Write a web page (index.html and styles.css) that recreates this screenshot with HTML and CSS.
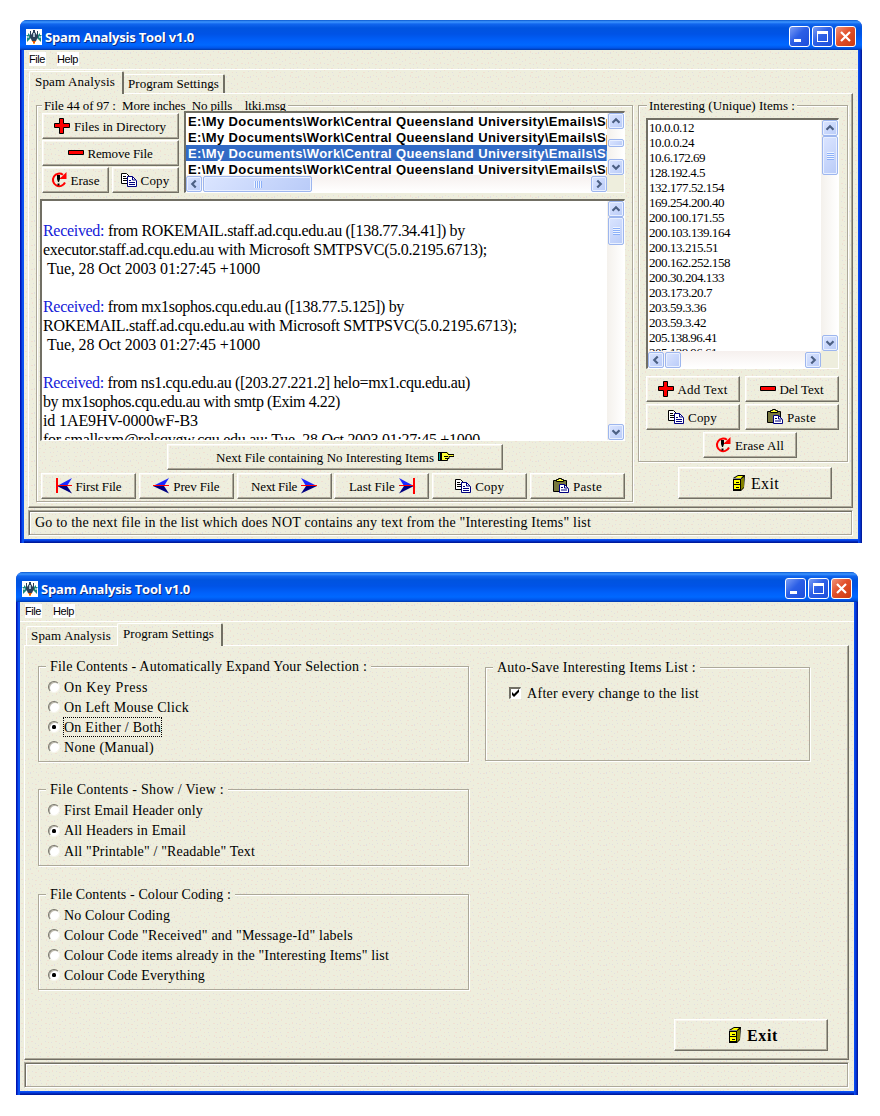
FILE: index.html
```html
<!DOCTYPE html>
<html lang="en">
<head>
<meta charset="utf-8">
<title>Spam Analysis Tool v1.0</title>
<link rel="stylesheet" href="styles.css">
</head>
<body>
<svg class="defs" width="0" height="0">
  <defs>
    <symbol id="ship" viewBox="0 0 16 16"><path fill="#fff" d="M0 0h16v16H0z"/><path fill="#1a8a7d" d="M2 4l3 3v2l-2 2-2 2V9l1-1-2-2h2zM14 4l-3 3v2l2 2 2 2V9l-1-1 2-2h-2z"/><path fill="#2b3f58" d="M4 2h1v4l2-3V1h2v2l2 3V2h1v6l-2 4H6L4 8z"/><path fill="#a9c0cf" d="M7 4h2v4H7zM2 7h1v2H2zM13 7h1v2h-1z"/><path fill="#ffad2b" d="M6 12h4v1H9v2H7v-2H6z"/><path fill="#e65010" d="M7 12h2v2H7z"/></symbol>
    <symbol id="plus" viewBox="0 0 16 16"><path fill="#f00" stroke="#000" d="M5.500.5h4v5h6v4h-6v6h-4v-6h-5v-4h5z"/></symbol>
    <symbol id="minus" viewBox="0 0 16 16"><path fill="#f00" stroke="#000" d="M.5 5.500h15v4H.5z"/></symbol>
    <symbol id="erase" viewBox="0 0 16 16"><path fill="none" stroke="#f00" stroke-width="2" d="M12 2.800A6.300 6.300 0 1 0 14 10.500"/><path fill="#f00" d="M15.500 0v7H9V6l2-1.500L13.500 2z"/><path d="M6 3h3v4l-1 3H7L6 7zM6.500 11.500h2v2h-2z"/></symbol>
    <symbol id="copy" viewBox="0 0 16 16"><path fill="#fff" stroke="#000" d="M.5 1.500h5l3 3v7h-8z"/><path stroke="#000" d="M2 4.500h3M2 6.500h4M2 8.500h4"/><path fill="#fff" stroke="#000080" d="M6.500 4.500h5l4 4v6h-9z"/><path fill="none" stroke="#000080" d="M11.500 4.500v3.500h3.500M8 8.500h2M8 10.500h6M8 12.500h6"/></symbol>
    <symbol id="paste" viewBox="0 0 16 16"><path fill="#77773d" stroke="#000" d="M.5 2.500h13v11H.5z"/><path fill="#ff3" stroke="#000" d="M3.500 3.500v-2h2v-1h3v1h2v2z"/><path fill="#fff" stroke="#000080" d="M6.500 6.500h5l4 4v4h-9z"/><path stroke="#000080" fill="none" d="M11.500 6.500v3.500h3.500M8 9.500h2M8 12h6"/></symbol>
    <symbol id="prev" viewBox="0 0 16 16"><path fill="#1a26ff" d="M16 0L0 8h11z"/><path fill="#000080" d="M16 15.500L0 8h11z"/><path stroke="#f00" d="M0 7.500h16"/></symbol>
    <symbol id="next" viewBox="0 0 16 16"><path fill="#1a26ff" d="M0 0l16 8H5z"/><path fill="#000080" d="M0 15.500L16 8H5z"/><path stroke="#f00" d="M0 7.500h16"/></symbol>
    <symbol id="first" viewBox="0 0 16 16"><path fill="#1a26ff" d="M16 0L1 8h10z"/><path fill="#000080" d="M16 15.500L1 8h10z"/><path stroke="#f00" d="M0 7.500h16"/><path fill="#f00" d="M0 0h2v15H0z"/></symbol>
    <symbol id="last" viewBox="0 0 16 16"><path fill="#1a26ff" d="M0 0l15 8H5z"/><path fill="#000080" d="M0 15.500L15 8H5z"/><path stroke="#f00" d="M0 7.500h16"/><path fill="#f00" d="M14 0h2v16h-2z"/></symbol>
    <symbol id="hand" viewBox="0 0 16 16"><path fill="#000" d="M0 3h4v9H0z"/><path fill="#0aa" d="M1 4h1v7H1z"/><path fill="#ff3" d="M4 4l3-1h3l1 2h5v2h-5v2h-1v2H4z"/><path stroke="#000" fill="none" d="M3.500 11.500h6v-2h1.500v-2h5v-2h-6M4 3.500h5l1 1.500M6 7.500h4M7 9.500h3"/></symbol>
    <symbol id="exit" viewBox="0 0 12 16"><path d="M0 3l5-3h7l-1 13-3 3H0z"/><path fill="#ff0" d="M1 5h6v4H1zM1 10h6v4H1zM5 1h5L8 3H2z"/><path fill="#828200" d="M8 4l3-2v10l-3 3z"/><path fill="#888" d="M0 3h8v1H0z"/><path d="M3 7h3v1H3zM3 12h3v1H3z"/></symbol>
    <symbol id="up" viewBox="0 0 16 16"><path fill="none" stroke="#4d6185" stroke-width="2.500" d="M4 10l4-4 4 4"/></symbol>
    <symbol id="down" viewBox="0 0 16 16"><path fill="none" stroke="#4d6185" stroke-width="2.500" d="M4 6l4 4 4-4"/></symbol>
    <symbol id="left" viewBox="0 0 16 16"><path fill="none" stroke="#4d6185" stroke-width="2.500" d="M10 4L6 8l4 4"/></symbol>
    <symbol id="right" viewBox="0 0 16 16"><path fill="none" stroke="#4d6185" stroke-width="2.500" d="M6 4l4 4-4 4"/></symbol>
  </defs>
</svg>

<main class="desk">
<section class="window">
  <header class="title"><svg class="i16"><use href="#ship"/></svg><b data-w="149">Spam Analysis Tool v1.0</b>
    <div class="caps"><i class="cap min"></i><i class="cap max"></i><i class="cap close"><svg viewBox="0 0 19 19"><path d="M5 5l9 9M14 5l-9 9"/></svg></i></div></header>
  <div class="client">
    <nav class="menu"><span data-w="16">File</span><span data-w="21">Help</span></nav>
    <div class="tabs"><div class="tab on first"><span data-w="80">Spam Analysis</span></div><div class="tab right"><span data-w="91">Program Settings</span></div></div>
    <div class="page">
      <div class="group files">
        <div class="legend"><span data-w="242">File 44 of 97 :  More inches  No pills    ltki.msg</span></div>
        <div class="toprow">
          <div class="filebtns">
            <button class="wide"><svg class="i16"><use href="#plus"/></svg><span data-w="92">Files in Directory</span></button>
            <button class="wide"><svg class="i16"><use href="#minus"/></svg><span data-w="65">Remove File</span></button>
            <button><svg class="i16"><use href="#erase"/></svg><span data-w="29">Erase</span></button>
            <button><svg class="i16"><use href="#copy"/></svg><span data-w="29">Copy</span></button>
          </div>
          <div class="box filelist">
            <div class="rows">
              <div><span data-w="409">E:\My Documents\Work\Central Queensland University\Emails\</span>Sp</div>
              <div><span data-w="409">E:\My Documents\Work\Central Queensland University\Emails\</span>Sp</div>
              <div class="sel"><span data-w="409">E:\My Documents\Work\Central Queensland University\Emails\</span>Sp</div>
              <div><span data-w="409">E:\My Documents\Work\Central Queensland University\Emails\</span>Sp</div>
            </div>
            <div class="vbar"><svg class="sb"><use href="#up"/></svg><i class="thumb t1"></i><svg class="sb end"><use href="#down"/></svg></div>
            <div class="hbar"><svg class="sb"><use href="#left"/></svg><i class="thumb t2 griph"></i><svg class="sb end"><use href="#right"/></svg></div>
          </div>
        </div>
        <div class="box memo">
          <div class="mail">
            <div></div>
            <div><span data-w="422"><em>Received:</em> from ROKEMAIL.staff.ad.cqu.edu.au ([138.77.34.41]) by</span></div>
            <div><span data-w="444">executor.staff.ad.cqu.edu.au with Microsoft SMTPSVC(5.0.2195.6713);</span></div>
            <div class="in"><span data-w="213">Tue, 28 Oct 2003 01:27:45 +1000</span></div>
            <div></div>
            <div><span data-w="361"><em>Received:</em> from mx1sophos.cqu.edu.au ([138.77.5.125]) by</span></div>
            <div><span data-w="474">ROKEMAIL.staff.ad.cqu.edu.au with Microsoft SMTPSVC(5.0.2195.6713);</span></div>
            <div class="in"><span data-w="213">Tue, 28 Oct 2003 01:27:45 +1000</span></div>
            <div></div>
            <div><span data-w="427"><em>Received:</em> from ns1.cqu.edu.au ([203.27.221.2] helo=mx1.cqu.edu.au)</span></div>
            <div><span data-w="297">by mx1sophos.cqu.edu.au with smtp (Exim 4.22)</span></div>
            <div><span data-w="155">id 1AE9HV-0000wF-B3</span></div>
            <div><span data-w="437">for smallsxm@relsqvgw.cqu.edu.au; Tue, 28 Oct 2003 01:27:45 +1000</span></div>
          </div>
          <div class="vbar"><svg class="sb"><use href="#up"/></svg><i class="thumb t3 gripv"></i><svg class="sb end"><use href="#down"/></svg></div>
        </div>
        <button class="nextno"><span data-w="218">Next File containing No Interesting Items</span><svg class="i16"><use href="#hand"/></svg></button>
        <div class="navrow">
          <button><svg class="i16"><use href="#first"/></svg><span data-w="46">First File</span></button>
          <button><svg class="i16"><use href="#prev"/></svg><span data-w="46">Prev File</span></button>
          <button><span data-w="46">Next File</span><svg class="i16"><use href="#next"/></svg></button>
          <button><span data-w="46">Last File</span><svg class="i16"><use href="#last"/></svg></button>
          <button><svg class="i16"><use href="#copy"/></svg><span data-w="29">Copy</span></button>
          <button><svg class="i16"><use href="#paste"/></svg><span data-w="29">Paste</span></button>
        </div>
      </div>
      <div class="side">
        <div class="group items">
          <div class="legend"><span data-w="146">Interesting (Unique) Items :</span></div>
          <div class="box iplist">
            <div class="ips">
              <div><span data-w="45">10.0.0.12</span></div><div><span data-w="45">10.0.0.24</span></div><div><span data-w="56">10.6.172.69</span></div><div><span data-w="56">128.192.4.5</span></div><div><span data-w="75">132.177.52.154</span></div><div><span data-w="75">169.254.200.40</span></div><div><span data-w="75">200.100.171.55</span></div><div><span data-w="81">200.103.139.164</span></div><div><span data-w="69">200.13.215.51</span></div><div><span data-w="81">200.162.252.158</span></div><div><span data-w="75">200.30.204.133</span></div><div><span data-w="63">203.173.20.7</span></div><div><span data-w="57">203.59.3.36</span></div><div><span data-w="57">203.59.3.42</span></div><div><span data-w="68">205.138.96.41</span></div><div><span data-w="68">205.138.96.61</span></div>
            </div>
            <div class="vbar"><svg class="sb"><use href="#up"/></svg><i class="thumb t4 gripv"></i><svg class="sb end"><use href="#down"/></svg></div>
            <div class="hbar"><svg class="sb"><use href="#left"/></svg><i class="thumb t5"></i><svg class="sb end"><use href="#right"/></svg></div>
          </div>
          <div class="itembtns">
            <button><svg class="i16"><use href="#plus"/></svg><span data-w="50">Add Text</span></button>
            <button><svg class="i16"><use href="#minus"/></svg><span data-w="44">Del Text</span></button>
            <button><svg class="i16"><use href="#copy"/></svg><span data-w="29">Copy</span></button>
            <button><svg class="i16"><use href="#paste"/></svg><span data-w="29">Paste</span></button>
            <button class="all"><svg class="i16"><use href="#erase"/></svg><span data-w="49">Erase All</span></button>
          </div>
        </div>
        <button class="exit"><svg class="i12"><use href="#exit"/></svg><span data-w="28">Exit</span></button>
      </div>
    </div>
    <footer class="status"><span data-w="556">Go to the next file in the list which does NOT contains any text from the "Interesting Items" list</span></footer>
  </div>
</section>

<section class="window second">
  <header class="title"><svg class="i16"><use href="#ship"/></svg><b data-w="149">Spam Analysis Tool v1.0</b>
    <div class="caps"><i class="cap min"></i><i class="cap max"></i><i class="cap close"><svg viewBox="0 0 19 19"><path d="M5 5l9 9M14 5l-9 9"/></svg></i></div></header>
  <div class="client">
    <nav class="menu"><span data-w="16">File</span><span data-w="21">Help</span></nav>
    <div class="tabs"><div class="tab first off"><span data-w="80">Spam Analysis</span></div><div class="tab on right"><span data-w="91">Program Settings</span></div></div>
    <div class="page">
      <div class="options">
        <div class="group o1">
          <div class="legend"><span data-w="317">File Contents - Automatically Expand Your Selection :</span></div>
          <div class="opt"><i class="radio"></i><span data-w="84">On Key Press</span></div>
          <div class="opt"><i class="radio"></i><span data-w="125">On Left Mouse Click</span></div>
          <div class="opt"><i class="radio dot"></i><span class="focus" data-w="97">On Either / Both</span></div>
          <div class="opt"><i class="radio"></i><span data-w="90">None (Manual)</span></div>
        </div>
        <div class="group o2">
          <div class="legend"><span data-w="174">File Contents - Show / View :</span></div>
          <div class="opt"><i class="radio"></i><span data-w="139">First Email Header only</span></div>
          <div class="opt"><i class="radio dot"></i><span data-w="122">All Headers in Email</span></div>
          <div class="opt"><i class="radio"></i><span data-w="191">All "Printable" / "Readable" Text</span></div>
        </div>
        <div class="group o3">
          <div class="legend"><span data-w="181">File Contents - Colour Coding :</span></div>
          <div class="opt"><i class="radio"></i><span data-w="106">No Colour Coding</span></div>
          <div class="opt"><i class="radio"></i><span data-w="289">Colour Code "Received" and "Message-Id" labels</span></div>
          <div class="opt"><i class="radio"></i><span data-w="325">Colour Code items already in the "Interesting Items" list</span></div>
          <div class="opt"><i class="radio dot"></i><span data-w="141">Colour Code Everything</span></div>
        </div>
      </div>
      <div class="saving">
        <div class="group auto">
          <div class="legend"><span data-w="199">Auto-Save Interesting Items List :</span></div>
          <div class="opt"><svg class="check" viewBox="0 0 9 9"><path d="M1 3v3l2 2 5-5V0L3 5z"/></svg><span data-w="172">After every change to the list</span></div>
        </div>
        <button class="exit bold"><svg class="i12"><use href="#exit"/></svg><span data-w="31">Exit</span></button>
      </div>
    </div>
    <footer class="status"></footer>
  </div>
</section>
</main>
<script src="labels.js"></script>
</body>
</html>
```
FILE: styles.css
```css
:root {
  --face: #eeeedd;
  --shade: #aca899;
  --dark: #716f64;
  --grain: url("data:image/svg+xml,%3Csvg xmlns='http://www.w3.org/2000/svg' width='24' height='24' shape-rendering='crispEdges'%3E%3Cpath fill='%23f0dfd2' d='M2 1h1v2h-1zM7 3h2v1h-2zM13 1h1v1h-1zM18 4h1v2h-1zM4 8h1v1h-1zM11 7h2v1h-2zM21 9h1v2h-1zM1 13h2v1h-2zM8 12h1v2h-1zM15 14h2v1h-2zM5 18h1v1h-1zM12 19h1v2h-1zM19 18h2v1h-2zM3 22h2v1h-2zM16 22h1v1h-1z'/%3E%3Cpath fill='%23e2dfe0' d='M4 3h1v1h-1zM10 2h1v2h-1zM16 2h1v1h-1zM21 1h1v1h-1zM1 7h1v1h-1zM7 8h1v1h-1zM15 9h1v1h-1zM18 11h1v1h-1zM5 14h1v1h-1zM12 13h1v1h-1zM21 15h1v1h-1zM2 18h1v1h-1zM9 17h1v1h-1zM15 18h1v1h-1zM8 21h1v1h-1zM20 22h1v1h-1z'/%3E%3C/svg%3E");
}
*, ::before { box-sizing: border-box; }
body { margin: 0; background: #fff; color: #000; font: 13px "Liberation Serif", serif; }
svg.defs { position: absolute; }
.desk { display: flex; flex-direction: column; gap: 29px; padding: 20px 0 0 20px; }
.window { width: 842px; height: 523px; display: flex; flex-direction: column; padding: 0 4px 4px; border-radius: 7px 7px 0 0;
  background: linear-gradient(90deg, #0014b4 0, #0014b4 1px, #0a4fee 2px, #0a50f5 4px, transparent 4px, transparent 838px, #0a50f5 838px, #0437d8 840px, #00138c 842px), linear-gradient(#0a50f5 519px, #0a50f5 520px, #0030cc 521px, #00138c 523px); }
.window.second { margin-left: -4px; }
.title { height: 30px; margin: 0 -4px; padding: 3px 6px 0; display: flex; align-items: center; border-radius: 7px 7px 0 0; flex: none;
  background: linear-gradient(#0958cf 0, #3d95ff 2px, #1166ee 4px, #0054df 8px, #0053e6 14px, #0061fb 21px, #0068ff 25px, #0055ea 28px, #0038a8 30px); }
.title b { margin-left: 3px; color: #fff; font: bold 13px "Open Sans", sans-serif; text-shadow: 1px 1px 0 #0b2a80; }
.i16 { width: 16px; height: 16px; flex: none; }
.i12 { width: 12px; height: 16px; flex: none; }
.caps { margin-left: auto; display: flex; gap: 2px; }
.cap { width: 21px; height: 21px; border: 1px solid #fff; border-radius: 3px; background: linear-gradient(135deg, #7b9df5, #2c5fe6 45%, #1d4edb); display: flex; }
.min::before { content: ""; width: 7px; height: 3px; background: #fff; margin: 12px 0 0 4px; }
.max::before { content: ""; width: 11px; height: 11px; border: 1px solid #fff; border-top-width: 3px; margin: 4px; }
.close { background: linear-gradient(135deg, #f0937b, #e2502a 45%, #cc3a10); }
.close path { fill: none; stroke: #fff; stroke-width: 2.200; }
.client { flex: 1; background: var(--grain) var(--face); }
.menu { height: 20px; border-bottom: 1px solid #fff; padding: 2px 0 0 5px; display: flex; gap: 11px; font: 11px/14px "Liberation Sans", sans-serif; align-items: flex-start; }
.menu span { background: #fff; padding: 0 1px 0 0; }
.tabs { height: 23px; padding-left: 5px; display: flex; align-items: flex-end; }
.tab { height: 19px; border: solid #fff; border-width: 1px 0 0 1px; border-radius: 2px 2px 0 0; padding: 0 0 0 3px; line-height: 18px; }
.tab.first { width: 95px; padding-left: 5px; border-right: 2px solid var(--dark); }
.tab.on { height: 23px; line-height: 20px; margin-bottom: -1px; background: var(--grain) var(--face); }
.tab.right { width: 101px; border-right: 2px solid var(--dark); padding-left: 4px; }
.tab.first.off { width: 93px; margin-left: 1px; padding-left: 4px; border-right: 0; }
.tab.on.right { width: 106px; padding-left: 5px; margin-left: -2px; }
.tab.first.on + .tab { border-left: 0; }
.page { margin-left: 4px; width: 825px; height: 415px; border: 1px solid; border-color: #fff var(--dark) var(--dark) #fff; box-shadow: inset -1px -1px 0 var(--shade); display: flex; align-items: flex-start; }
.status { margin: 2px 0 0 4px; width: 825px; height: 26px; border: 1px solid; border-color: var(--shade) #fff #fff var(--shade); box-shadow: inset 1px 1px 0 var(--dark), inset -1px -1px 0 var(--shade), inset 2px 2px 0 #fff; padding-left: 6px; font-size: 14px; line-height: 24px; white-space: pre; }
.group { position: relative; border: 1px solid var(--shade); box-shadow: 1px 1px 0 #fff, inset 1px 1px 0 #fff; }
.legend { position: absolute; top: -9px; left: 5px; height: 17px; line-height: 18px; padding: 0 2px; background: var(--grain) var(--face); white-space: pre; }
[data-w] { display: inline-block; white-space: pre; }
button { display: flex; align-items: center; justify-content: center; gap: 4px; height: 26px; padding: 0 1px 0 0; color: #000; font: 13px "Liberation Serif", serif; background: var(--grain) var(--face);
  border: 1px solid; border-color: #fff var(--dark) var(--dark) #fff; box-shadow: inset -1px -1px 0 var(--shade), inset 1px 1px 0 #f8f6ee; border-radius: 0; }
button span { padding-top: 1px; }
button .i16 { margin-bottom: 1px; }
.files { margin: 11px 0 0 7px; width: 597px; height: 397px; padding: 5px 0 0 3px; }
.toprow { position: relative; z-index: 1; display: flex; gap: 5px; padding-left: 2px; }
.filebtns { margin-top: 2px; width: 137px; display: grid; grid-template-columns: 67px 67px; column-gap: 3px; row-gap: 1px; align-content: start; }
.wide { grid-column: span 2; }
.box { background: #fff; border: solid; border-width: 2px 1px 1px 2px; border-color: var(--dark) #fff #fff var(--dark); display: grid; grid-template-columns: minmax(0, 1fr) 17px; overflow: hidden; }
.filelist { width: 441px; height: 82px; grid-template-rows: minmax(0, 1fr) 17px; background: var(--face); }
.rows { background: #fff; overflow: hidden; font: bold 13px/18px "Liberation Sans", sans-serif; white-space: nowrap; }
.rows div { padding-left: 2px; height: 16px; display: flex; }
.rows .sel { background: #316ac5; color: #fff; }
.memo { width: 585px; height: 242px; margin-top: 6px; grid-template-rows: minmax(0, 1fr); }
.mail { overflow: hidden; font-size: 16px; line-height: 19px; padding: 1px 0 0 1px; }
.mail div { height: 19px; white-space: pre; }
.mail .in { padding-left: 4px; }
.mail em { font-style: normal; color: #1420d8; }
.vbar { display: flex; flex-direction: column; background: linear-gradient(90deg, #f4f1ec, #fff); padding: 0 0 0 1px; }
.hbar { display: flex; background: linear-gradient(#f6f0ee, #fff); padding: 1px 0 0 0; }
.sb, .thumb { width: 16px; height: 16px; border: 1px solid #9db6ee; border-radius: 2px; background: linear-gradient(135deg, #dbe5ff, #b9cbf8); box-shadow: inset 0 0 0 1px #e9f0ff; flex: none; }
.end { margin: auto 0 0; }
.hbar .end { margin: 0 0 0 auto; }
.vbar .t1 { height: 8px; margin-top: 10px; }
.hbar .t2 { width: 109px; margin-left: 1px; }
.vbar .t3 { height: 28px; }
.vbar .t4 { height: 39px; }
.hbar .t5 { margin-left: 1px; }
.gripv, .griph { display: flex; align-items: center; justify-content: center; }
.gripv::before { content: ""; width: 7px; height: 8px; background: repeating-linear-gradient(#eef4ff 0 1px, #8cb0f8 1px 2px); }
.griph::before { content: ""; width: 8px; height: 7px; background: repeating-linear-gradient(90deg, #eef4ff 0 1px, #8cb0f8 1px 2px); }
.nextno { width: 336px; margin: 3px 0 0 127px; padding-right: 0; }
.navrow { display: flex; justify-content: space-between; width: 584px; margin: 3px 0 0 1px; }
.navrow button { width: 95px; padding: 0; }
.side { margin: 11px 0 0 5px; }
.items { width: 210px; height: 357px; padding: 12px 0 0 7px; }
.items .legend { left: 8px; }
.iplist { width: 193px; height: 251px; grid-template-rows: minmax(0, 1fr) 17px; background: var(--face); }
.ips { background: #fff; overflow: hidden; padding: 0 0 0 1px; line-height: 15px; }
.ips div { height: 15px; }
.itembtns { margin-top: 7px; width: 193px; display: grid; grid-template-columns: 94px 94px; justify-content: space-between; row-gap: 2px; }
.itembtns .all { grid-column: span 2; width: 94px; margin-left: 57px; }
.exit { width: 154px; height: 32px; margin: 5px 0 0 40px; gap: 6px; padding: 0 0 0 2px; font-size: 16px; }
.options { margin: 20px 0 0 13px; width: 431px; display: flex; flex-direction: column; font-size: 14px; }
.options .group { padding: 10px 0 0 9px; }
.options .legend, .saving .legend { left: 7px; padding: 0 4px; }
.o1 { height: 96px; }
.o2 { height: 77px; margin-top: 27px; }
.o3 { height: 96px; margin-top: 28px; }
.opt { display: flex; align-items: center; gap: 4px; height: 20px; }
.opt span { padding-top: 1px; }
.o2 .opt { height: 20.500px; }
.radio { width: 12px; height: 12px; border-radius: 50%; background: #fff; border: 1px solid; border-color: #77756a #f6f5ec #f6f5ec #77756a; box-shadow: inset 1px 1px 0 #b9b6a8; display: flex; align-items: center; justify-content: center; }
.dot::before { content: ""; width: 4px; height: 4px; border-radius: 1.500px; background: #000; }
.focus { outline: 1px dotted #000; line-height: 17px; }
.saving { margin: 21px 0 0 16px; font-size: 14px; }
.auto { width: 325px; height: 94px; padding: 15px 0 0 23px; }
.auto .opt { gap: 6px; }
.check { width: 12px; height: 12px; background: #fff; border: solid; border-width: 2px 1px 1px 2px; border-color: var(--dark) #fff #fff var(--dark); }
.saving .exit { margin: 258px 0 0 189px; padding-left: 5px; }
.bold { font-weight: bold; }
```
FILE: labels.js
```js
// Tracks every label out to its fixed width (data-w, in pixels).
document.querySelectorAll('[data-w]').forEach(function (el) {
  var style = getComputedStyle(el);
  var natural = el.getBoundingClientRect().width - parseFloat(style.paddingRight);
  el.style.letterSpacing = (el.dataset.w - natural) / el.textContent.length + 'px';
});
```
